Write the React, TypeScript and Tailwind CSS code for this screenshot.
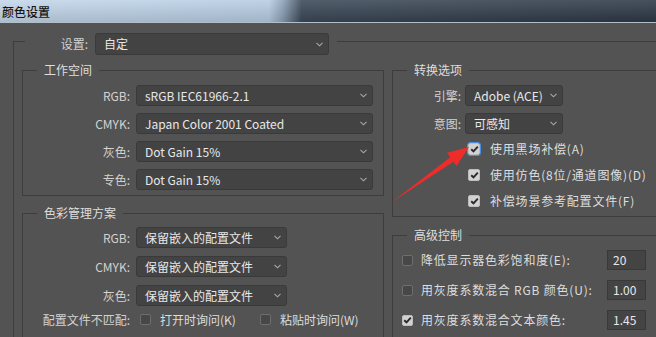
import React from 'react';

const Chevron: React.FC = () => (
  <svg width="7" height="5" viewBox="0 0 7 5" fill="none">
    <path d="M0.5 0.8 L3.5 3.8 L6.5 0.8" stroke="#a9a9a9" strokeWidth="1.1" />
  </svg>
);

const Select: React.FC<{ value: string; className: string }> = ({ value, className }) => (
  <div
    className={`flex h-[21px] items-center justify-between rounded-[3px] border border-[#3a3a3a] bg-[#434343] pl-[8px] pr-[5px] text-[#e8e8e8] ${className}`}
  >
    <span className="whitespace-nowrap leading-[16px]">{value}</span>
    <Chevron />
  </div>
);

const Check: React.FC<{ checked?: boolean; focus?: boolean; size: string }> = ({ checked, focus, size }) => (
  <div
    className={`flex shrink-0 items-center justify-center rounded-[2px] border ${size} ${
      checked ? 'border-[#bdbdbd] bg-[#d2d2d2]' : 'border-[#6e6e6e] bg-[#474747]'
    } ${focus ? 'outline outline-1 outline-[#4a8fe0]' : ''}`}
  >
    {checked && (
      <svg width="9" height="8" viewBox="0 0 9 8" fill="none">
        <path d="M1.2 4.2 L3.5 6.3 L7.8 1.6" stroke="#2a2a2a" strokeWidth="1.9" />
      </svg>
    )}
  </div>
);

const Legend: React.FC<{ children: React.ReactNode }> = ({ children }) => (
  <legend className="ml-[14px] px-[7px] text-[12px] leading-[14px] text-[#dedede]">{children}</legend>
);

const Row: React.FC<{ label: string; labelW: string; gap: string; children: React.ReactNode }> = ({
  label,
  labelW,
  gap,
  children,
}) => (
  <div className={`flex h-[21px] items-center ${gap}`}>
    <span className={`shrink-0 text-right leading-[16px] text-[#d2d2d2] ${labelW}`}>{label}</span>
    {children}
  </div>
);

export default function App() {
  return (
    <div
      className="relative h-[337px] w-[656px] overflow-hidden bg-[#535353] text-[12px]"
      style={{ fontFamily: '"Noto Sans CJK SC", "Noto Sans", sans-serif' }}
    >
      {/* title bar */}
      <div className="h-[23px] border-b border-[#b4bec8] bg-[linear-gradient(to_bottom,rgba(255,255,255,0.12),rgba(0,0,0,0.12)),linear-gradient(to_right,#c4d7ea_0%,#b7cde3_41%,#8ea4ba_43%,#3b4857_46%,#2e3946_100%)] pl-[2px] pt-[3px]">
        <span className="font-medium leading-[14px] text-[#141414]">颜色设置</span>
      </div>

      <div className="pl-[13px] pt-[5px]">
        <fieldset className="w-[720px] border border-[#3d3d3d] pb-[20px] pl-[8px] pt-[8px]">
          <legend className="ml-[3px] pr-[8px] pt-[5px]">
            <div className="flex h-[22px] items-center gap-[7px]">
              <span className="w-[63px] text-right leading-[16px] text-[#d2d2d2]">设置:</span>
              <Select value="自定" className="h-[22px] w-[234px]" />
            </div>
          </legend>

          <div className="flex gap-[8px]">
            {/* left column */}
            <div className="flex w-[362px] flex-col gap-[10px]">
              <fieldset className="border border-[#3d3d3d] pb-[5px] pt-[8px]">
                <Legend>工作空间</Legend>
                <div className="flex flex-col gap-[7px]">
                  <Row label="RGB:" labelW="w-[107px]" gap="gap-[6px]">
                    <Select value="sRGB IEC61966-2.1" className="w-[237px]" />
                  </Row>
                  <Row label="CMYK:" labelW="w-[107px]" gap="gap-[6px]">
                    <Select value="Japan Color 2001 Coated" className="w-[237px]" />
                  </Row>
                  <Row label="灰色:" labelW="w-[107px]" gap="gap-[6px]">
                    <Select value="Dot Gain 15%" className="w-[237px]" />
                  </Row>
                  <Row label="专色:" labelW="w-[107px]" gap="gap-[6px]">
                    <Select value="Dot Gain 15%" className="w-[237px]" />
                  </Row>
                </div>
              </fieldset>

              <fieldset className="h-[160px] border border-[#3d3d3d] pt-[7px]">
                <Legend>色彩管理方案</Legend>
                <div className="flex flex-col gap-[8px]">
                  <Row label="RGB:" labelW="w-[107px]" gap="gap-[6px]">
                    <Select value="保留嵌入的配置文件" className="w-[151px]" />
                  </Row>
                  <Row label="CMYK:" labelW="w-[107px]" gap="gap-[6px]">
                    <Select value="保留嵌入的配置文件" className="w-[151px]" />
                  </Row>
                  <Row label="灰色:" labelW="w-[107px]" gap="gap-[6px]">
                    <Select value="保留嵌入的配置文件" className="w-[151px]" />
                  </Row>
                </div>
                <div className="mt-[6px] flex h-[15px] items-center">
                  <span className="w-[107px] shrink-0 text-right leading-[14px] text-[#d2d2d2]">配置文件不匹配:</span>
                  <div className="ml-[10px] flex w-[120px] shrink-0 items-center gap-[9px]">
                    <Check size="size-[11px]" />
                    <span className="leading-[14px] text-[#dcdcdc]">打开时询问(K)</span>
                  </div>
                  <div className="flex items-center gap-[9px]">
                    <Check size="size-[11px]" />
                    <span className="leading-[14px] text-[#dcdcdc]">粘贴时询问(W)</span>
                  </div>
                </div>
              </fieldset>
            </div>

            {/* right column */}
            <div className="flex w-[300px] flex-col gap-[11px]">
              <fieldset className="border border-[#3d3d3d] pb-[7px] pt-[8px]">
                <Legend>转换选项</Legend>
                <div className="flex flex-col gap-[7px]">
                  <Row label="引擎:" labelW="w-[68px]" gap="gap-[4px]">
                    <Select value="Adobe (ACE)" className="w-[98px]" />
                  </Row>
                  <Row label="意图:" labelW="w-[68px]" gap="gap-[4px]">
                    <Select value="可感知" className="w-[98px]" />
                  </Row>
                </div>
                <div className="mt-[7px] flex flex-col gap-[10px] pl-[75px]">
                  {[
                    { t: '使用黑场补偿(A)', f: true },
                    { t: '使用仿色(8位/通道图像)(D)', f: false },
                    { t: '补偿场景参考配置文件(F)', f: false },
                  ].map((c) => (
                    <div key={c.t} className="flex h-[16px] items-center gap-[10px]">
                      <Check checked focus={c.f} size="size-[12px]" />
                      <span className="whitespace-nowrap leading-[14px] tracking-[0.8px] text-[#dedede]">{c.t}</span>
                    </div>
                  ))}
                </div>
              </fieldset>

              <fieldset className="h-[120px] border border-[#3d3d3d] pt-[8px]">
                <Legend>高级控制</Legend>
                <div className="flex flex-col gap-[10px] pl-[9px]">
                  {[
                    { t: '降低显示器色彩饱和度(E):', v: '20', c: false },
                    { t: '用灰度系数混合 RGB 颜色(U):', v: '1.00', c: false },
                    { t: '用灰度系数混合文本颜色:', v: '1.45', c: true },
                  ].map((r) => (
                    <div key={r.t} className="flex h-[20px] items-center">
                      <Check checked={r.c} size="size-[11px]" />
                      <span className="ml-[8px] w-[186px] shrink-0 whitespace-nowrap leading-[14px] tracking-[0.8px] text-[#dedede]">
                        {r.t}
                      </span>
                      <div className="flex h-[20px] w-[39px] items-center border border-[#393939] bg-[#444444] pl-[5px] leading-[14px] text-[#e8e8e8]">
                        {r.v}
                      </div>
                    </div>
                  ))}
                </div>
              </fieldset>
            </div>
          </div>
        </fieldset>
      </div>

      {/* red annotation arrow */}
      <svg className="pointer-events-none absolute inset-0" width="656" height="337" viewBox="0 0 656 337">
        <polygon
          points="392,202 450.3,157.3 447,152.8 469,147 456.5,166 453.3,161.8"
          fill="#ee2d2a"
        />
      </svg>
    </div>
  );
}
